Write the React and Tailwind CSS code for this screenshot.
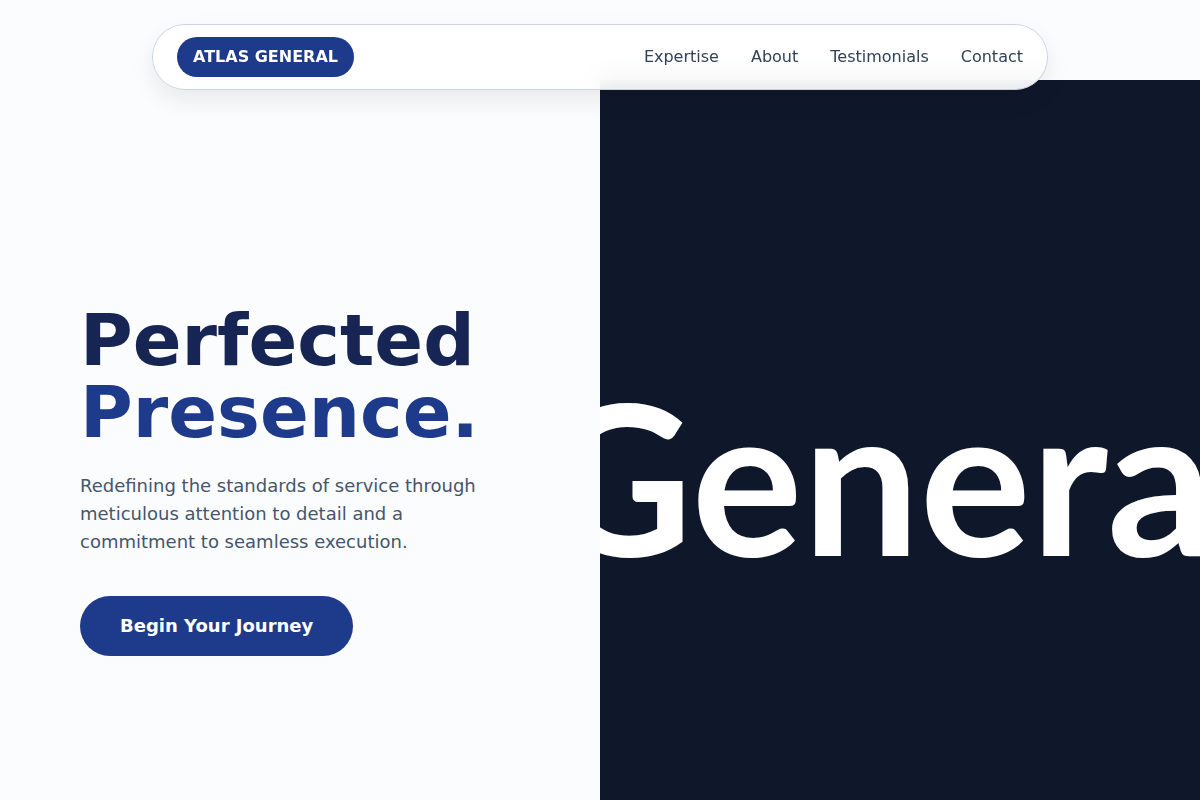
import React from 'react';

const navLinks = [
    { label: 'Expertise', href: '#expertise' },
    { label: 'About', href: '#about' },
    { label: 'Testimonials', href: '#testimonials' },
    { label: 'Contact', href: '#contact' }
];

function Navbar() {
    return (
        <header className="fixed inset-x-0 top-6 z-50 px-4">
            <nav className="mx-auto flex max-w-4xl items-center justify-between rounded-full border border-slate-300 bg-white/90 px-6 py-3 shadow-[0_10px_24px_rgba(0,0,0,0.08)] backdrop-blur-md">
                <a href="#home" className="rounded-full bg-[#1e3a8a] px-4 py-2 font-bold text-white">
                    ATLAS GENERAL
                </a>
                <div className="hidden items-center gap-8 md:flex">
                    {navLinks.map((link) => (
                        <a key={link.href} href={link.href} className="text-slate-700 hover:text-blue-900">
                            {link.label}
                        </a>
                    ))}
                </div>
            </nav>
        </header>
    );
}

function Hero() {
    return (
        <section id="home" className="grid min-h-screen grid-cols-1 md:grid-cols-2">
            <div className="flex flex-col items-start justify-center px-8 lg:px-20">
                <h1 className="mb-6 text-7xl leading-none font-bold text-[#172554]">
                    Perfected
                    <span className="block text-[#1e3a8a]">Presence.</span>
                </h1>
                <p className="mb-10 max-w-md text-lg text-slate-600">
                    Redefining the standards of service through meticulous attention to detail and a
                    commitment to seamless execution.
                </p>
                <button
                    type="button"
                    className="rounded-full bg-[#1e3a8a] px-10 py-4 text-lg font-semibold text-white hover:bg-blue-800"
                >
                    Begin Your Journey
                </button>
            </div>

            {/* Oversized wordmark, cropped by the panel */}
            <div className="flex min-w-0 items-center justify-center overflow-hidden bg-[#0f172a] pb-2 pl-1.5">
                <span className="font-['Lato',sans-serif] text-[208px] leading-none font-bold whitespace-nowrap text-white">
                    General
                </span>
            </div>
        </section>
    );
}

export default function App() {
    return (
        <div className="min-h-screen bg-[#fafcfe] pt-20 font-['DejaVu_Sans',sans-serif]">
            <Navbar />
            <main>
                <Hero />
            </main>
        </div>
    );
}
